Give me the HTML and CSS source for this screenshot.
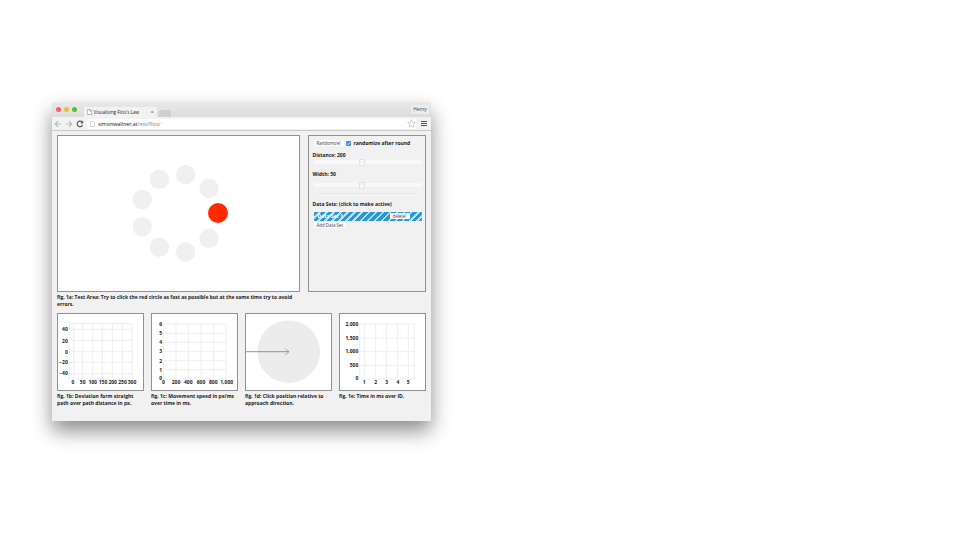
FILE: index.html
```html
<!DOCTYPE html>
<html lang="en">
<head>
    <meta charset="UTF-8">
    <title>Visualising Fitts's Law</title>
    <link rel="stylesheet" href="styles.css">
</head>
<body>

<div class="window">
    <div class="tabstrip">
        <span class="light red"></span>
        <span class="light yellow"></span>
        <span class="light green"></span>
        <div class="tab">
            <svg class="page-icon" viewBox="0 0 6 7"><path d="M.5.5h3.2L5.5 2.3v4.2H.5zM3.6.5v2h1.9" fill="#fff" stroke="#777" stroke-width=".6"/></svg>
            <span class="tab-title">Visualising Fitts's Law</span>
            <span class="tab-close">×</span>
        </div>
        <div class="new-tab"></div>
        <div class="profile">Henry</div>
    </div>
    <div class="toolbar">
        <svg class="nav" viewBox="0 0 8 8"><path d="M7 4H1.500M4 1.200 1.200 4 4 6.800" fill="none" stroke="#bbb" stroke-width="1.200"/></svg>
        <svg class="nav" viewBox="0 0 8 8"><path d="M1 4h5.500M4 1.200 6.800 4 4 6.800" fill="none" stroke="#bbb" stroke-width="1.200"/></svg>
        <svg class="nav" viewBox="0 0 8 8"><path d="M6.600 5A2.800 2.800 0 1 1 6.200 2.200" fill="none" stroke="#555" stroke-width="1.100"/><path d="M7.200.6v2.800H4.400z" fill="#555"/></svg>
        <div class="omnibox">
            <svg class="page-icon" viewBox="0 0 6 7"><path d="M.5.5h3.200L5.500 2.300v4.200H.5z" fill="#fff" stroke="#aaa" stroke-width=".6"/></svg>
            <span class="url"><b>simonwallner.at</b>/ext/fitts/</span>
            <svg class="star" viewBox="0 0 10 10"><path d="M5 .8 6.300 3.600 9.300 4 7.100 6 7.700 9 5 7.500 2.300 9 2.900 6 .7 4 3.700 3.600z" fill="#fff" stroke="#aaa" stroke-width=".6"/></svg>
        </div>
        <div class="menu"><span></span><span></span><span></span></div>
    </div>

    <div class="page">
        <div class="top-row">
            <div class="test-area">
                <svg viewBox="0 0 243 157" width="243" height="157">
                    <g fill="#f0f0f0">
                        <circle cx="152" cy="53.500" r="9.700"/>
                        <circle cx="128.700" cy="39.700" r="9.700"/>
                        <circle cx="102.300" cy="44.300" r="9.700"/>
                        <circle cx="85.300" cy="64.700" r="9.700"/>
                        <circle cx="85.300" cy="91.700" r="9.700"/>
                        <circle cx="102.300" cy="112.300" r="9.700"/>
                        <circle cx="128.700" cy="117" r="9.700"/>
                        <circle cx="152" cy="103.300" r="9.700"/>
                    </g>
                    <circle cx="161" cy="78" r="10" fill="#ff2a00"/>
                </svg>
            </div>
            <div class="controls">
                <div class="control-row">
                    <button class="btn">Randomize!</button>
                    <span class="checkbox"><svg viewBox="0 0 6 6"><path d="M1.200 3 2.500 4.400 4.800 1.500" fill="none" stroke="#fff" stroke-width=".9"/></svg></span>
                    <label>randomize after round</label>
                </div>
                <div class="label distance-label">Distance: 200</div>
                <div class="slider distance-slider"><span class="thumb"></span></div>
                <div class="label width-label">Width: 50</div>
                <div class="slider width-slider"><span class="thumb"></span></div>
                <div class="divider"></div>
                <div class="label sets-label">Data Sets: (click to make active)</div>
                <div class="dataset">
                    <span class="dataset-name">Data Set 1</span>
                    <button class="btn">delete!</button>
                </div>
                <button class="btn add-set">Add Data Set</button>
            </div>
        </div>
        <p class="caption main-caption">fig. 1a: Test Area: Try to click the red circle as fast as possible but at the same time try to avoid errors.</p>

        <div class="figures">
            <div class="figure">
                <div class="chart">
                    <svg viewBox="0 0 86 78" width="86" height="78">
                        <path class="grid" d="M12 10.700H75.500M12 16.300H75.500M12 27.300H75.500M12 38.300H75.500M12 49.300H75.500M12 60.700H75.500M12 66H75.500M12.300 10.500V66M16.700 10.500V66M25.700 10.500V66M35.700 10.500V66M45.300 10.500V66M55.300 10.500V66M65.300 10.500V66M75.300 10.500V66"/>
                        <g class="tick" text-anchor="end">
                            <text x="10.800" y="18.100">40</text>
                            <text x="10.800" y="29.500">20</text>
                            <text x="10.800" y="40.500">0</text>
                            <text x="10.800" y="51.100">−20</text>
                            <text x="10.800" y="62.300">−40</text>
                        </g>
                        <g class="tick" text-anchor="middle">
                            <text x="16" y="70.500">0</text>
                            <text x="25.700" y="70.500">50</text>
                            <text x="35.700" y="70.500">100</text>
                            <text x="46" y="70.500">150</text>
                            <text x="55.700" y="70.500">200</text>
                            <text x="65.500" y="70.500">250</text>
                            <text x="75" y="70.500">300</text>
                        </g>
                    </svg>
                </div>
                <p class="caption">fig. 1b: Deviation form straight path over path distance in px.</p>
            </div>
            <div class="figure">
                <div class="chart">
                    <svg viewBox="0 0 86 78" width="86" height="78">
                        <path class="grid" d="M12 11H75.300M12 20.300H75.300M12 29.300H75.300M12 38.300H75.300M12 47.700H75.300M12 56.700H75.300M12 66H75.300M12.300 11V66M25 11V66M37.300 11V66M50 11V66M62.700 11V66M75 11V66"/>
                        <g class="tick" text-anchor="end">
                            <text x="11" y="12.800">6</text>
                            <text x="11" y="21.800">5</text>
                            <text x="11" y="31.300">4</text>
                            <text x="11" y="40.300">3</text>
                            <text x="11" y="49.800">2</text>
                            <text x="11" y="58.800">1</text>
                            <text x="11" y="67.300">0</text>
                        </g>
                        <g class="tick" text-anchor="middle">
                            <text x="12.500" y="70.500">0</text>
                            <text x="25" y="70.500">200</text>
                            <text x="37.300" y="70.500">400</text>
                            <text x="50" y="70.500">600</text>
                            <text x="62.300" y="70.500">800</text>
                            <text x="75.700" y="70.500">1,000</text>
                        </g>
                    </svg>
                </div>
                <p class="caption">fig. 1c: Movement speed in px/ms over time in ms.</p>
            </div>
            <div class="figure">
                <div class="chart">
                    <svg viewBox="0 0 86 78" width="86" height="78">
                        <circle cx="43.700" cy="38.700" r="31.300" fill="#ececec"/>
                        <path d="M0 38.700H44" fill="none" stroke="#777" stroke-width=".8"/>
                        <path d="M40 35.400 44 38.700 40 42" fill="none" stroke="#777" stroke-width=".5"/>
                    </svg>
                </div>
                <p class="caption">fig. 1d: Click position relative to approach direction.</p>
            </div>
            <div class="figure">
                <div class="chart">
                    <svg viewBox="0 0 86 78" width="86" height="78">
                        <path class="grid" d="M20 11H75.500M20 25H75.500M20 38.300H75.500M20 52.300H75.500M20 66H75.500M20.300 11V66M25.700 11V66M36.700 11V66M47.700 11V66M58.300 11V66M69.300 11V66M75.300 11V66"/>
                        <g class="tick" text-anchor="end">
                            <text x="19.300" y="13.100">2,000</text>
                            <text x="19.300" y="26.500">1,500</text>
                            <text x="19.300" y="40.100">1,000</text>
                            <text x="19.300" y="54.100">500</text>
                            <text x="19.300" y="67.100">0</text>
                        </g>
                        <g class="tick" text-anchor="middle">
                            <text x="25.300" y="70.800">1</text>
                            <text x="36.700" y="70.800">2</text>
                            <text x="47.700" y="70.800">3</text>
                            <text x="59" y="70.800">4</text>
                            <text x="69.300" y="70.800">5</text>
                        </g>
                    </svg>
                </div>
                <p class="caption">fig. 1e: Time in ms over ID.</p>
            </div>
        </div>
    </div>
</div>

</body>
</html>
```

FILE: styles.css
```css
html, body {
    margin: 0;
    height: 540px;
    overflow: hidden;
    background-color: #fff;
}
body {
    padding: 102px 0 0 52px;
    box-sizing: border-box;
    font-family: "Open Sans", sans-serif;
    color: #222;
}
.window {
    width: 379px;
    height: 319px;
    background-color: #f1f1f1;
    border-radius: 3px 3px 0 0;
    box-shadow: 0 10px 20px rgba(0, 0, 0, 0.45);
    overflow: hidden;
}
.tabstrip {
    height: 15px;
    display: flex;
    align-items: center;
    padding-left: 4px;
    background: linear-gradient(#e9e9e9, #dcdcdc);
}
.light {
    width: 5px;
    height: 5px;
    margin-right: 3px;
    border-radius: 50%;
}
.red { background-color: #fc5b57; }
.yellow { background-color: #e5bf3c; }
.green { background-color: #57c038; }
.tab {
    width: 73px;
    height: 10px;
    margin: 5px 0 0 4px;
    padding: 0 3px 0 2.500px;
    box-sizing: border-box;
    display: flex;
    align-items: center;
    gap: 2px;
    background-color: #f2f2f2;
    border-radius: 2px 2px 0 0;
    font-size: 4.600px;
}
.tab-title { flex: 1; white-space: nowrap; }
.tab-close { font-size: 6px; color: #555; }
.page-icon { width: 5px; height: 6px; flex: none; }
.new-tab {
    width: 12px;
    height: 7px;
    margin: 8px 0 0 2px;
    background-color: #cfcfcf;
    border-radius: 2px 2px 0 0;
}
.profile {
    margin: -1px 2px 0 auto;
    width: 18px;
    height: 9px;
    line-height: 9px;
    text-align: center;
    background-color: #ececec;
    border-radius: 2px;
    font-size: 4.800px;
    color: #444;
}
.toolbar {
    height: 14px;
    display: flex;
    align-items: center;
    padding: 0 4px 0 2px;
    gap: 3px;
    background-color: #f2f2f2;
    border-bottom: 1px solid #c8c8c8;
    box-sizing: border-box;
}
.nav { width: 8px; height: 8px; flex: none; }
.omnibox {
    flex: 1;
    height: 10px;
    display: flex;
    align-items: center;
    gap: 3px;
    padding: 0 1px 0 3px;
    background-color: #fff;
    border-radius: 2px;
    font-size: 5.300px;
    color: #777;
}
.url { flex: 1; }
.url b { font-weight: 400; color: #111; }
.star { width: 9px; height: 9px; }
.menu {
    width: 6px;
    margin-left: 1px;
    display: flex;
    flex-direction: column;
    gap: 1px;
}
.menu span {
    height: 1px;
    background-color: #555;
}
.page {
    padding: 4px 5px 0;
}
.top-row {
    display: flex;
    gap: 8px;
}
.test-area, .chart {
    background-color: #fff;
    border: 1px solid #929292;
}
.test-area {
    width: 241px;
    height: 155px;
    overflow: hidden;
}
.test-area svg, .chart svg { display: block; margin: -1px; }
.controls {
    width: 109px;
    height: 147px;
    border: 1px solid #929292;
    padding: 4px 3.500px;
}
.control-row {
    display: flex;
    align-items: center;
    height: 6px;
    gap: 2.500px;
    margin-left: 1px;
    font-size: 5px;
    font-weight: 700;
}
.btn {
    font-family: inherit;
    font-size: 4.400px;
    color: #444;
    background-color: #fafafa;
    border: none;
    border-radius: 1px;
    padding: 0 3px;
    height: 6px;
    line-height: 6px;
}
.checkbox {
    width: 5px;
    height: 5px;
    background-color: #3a8fdc;
    border-radius: 1px;
    display: block;
}
.checkbox svg { display: block; }
.label {
    font-size: 5px;
    font-weight: 700;
    line-height: 7px;
}
.distance-label { margin-top: 6px; }
.width-label { margin-top: 6.500px; }
.sets-label { margin-top: 6.500px; }
.slider {
    position: relative;
    height: 4px;
    margin: 1px 0 0 1px;
    background-color: #f8f8f8;
    border-radius: 2px;
}
.width-slider { margin-top: 5.500px; }
.thumb {
    position: absolute;
    left: 45px;
    top: -1.500px;
    width: 6px;
    height: 7px;
    box-sizing: border-box;
    background-color: #f6f6f6;
    border: 0.500px solid #e2e2e2;
    border-radius: 1px;
}
.divider {
    height: 1px;
    margin: 6px 6px 0;
    background-color: #e4e4e4;
}
.dataset {
    height: 8.500px;
    margin: 4.500px 0 0 1px;
    padding: 0 12px 0 4px;
    display: flex;
    align-items: center;
    justify-content: space-between;
    border-radius: 1px;
    background: repeating-linear-gradient(135deg, #2a96d2 0, #2a96d2 3.200px, #bcdff0 3.200px, #bcdff0 5px);
}
.dataset-name {
    font-size: 5px;
    font-weight: 700;
    color: #fff;
}
.add-set {
    display: block;
    margin: 1.500px 0 0 1px;
}
.caption {
    margin: 0;
    font-size: 5px;
    font-weight: 700;
    line-height: 7.300px;
    color: #222;
}
.main-caption {
    margin-top: 1.500px;
    width: 243px;
    height: 15px;
}
.figures {
    display: flex;
    gap: 7px;
    margin-top: 4.500px;
}
.figure { width: 87px; }
.chart {
    width: 85px;
    height: 76px;
    overflow: hidden;
    margin-bottom: 1.500px;
}
.grid {
    fill: none;
    stroke: #eeeeee;
    stroke-width: 1;
}
.tick {
    font-family: "Open Sans", sans-serif;
    font-size: 5px;
    font-weight: 700;
    fill: #222;
}
```
